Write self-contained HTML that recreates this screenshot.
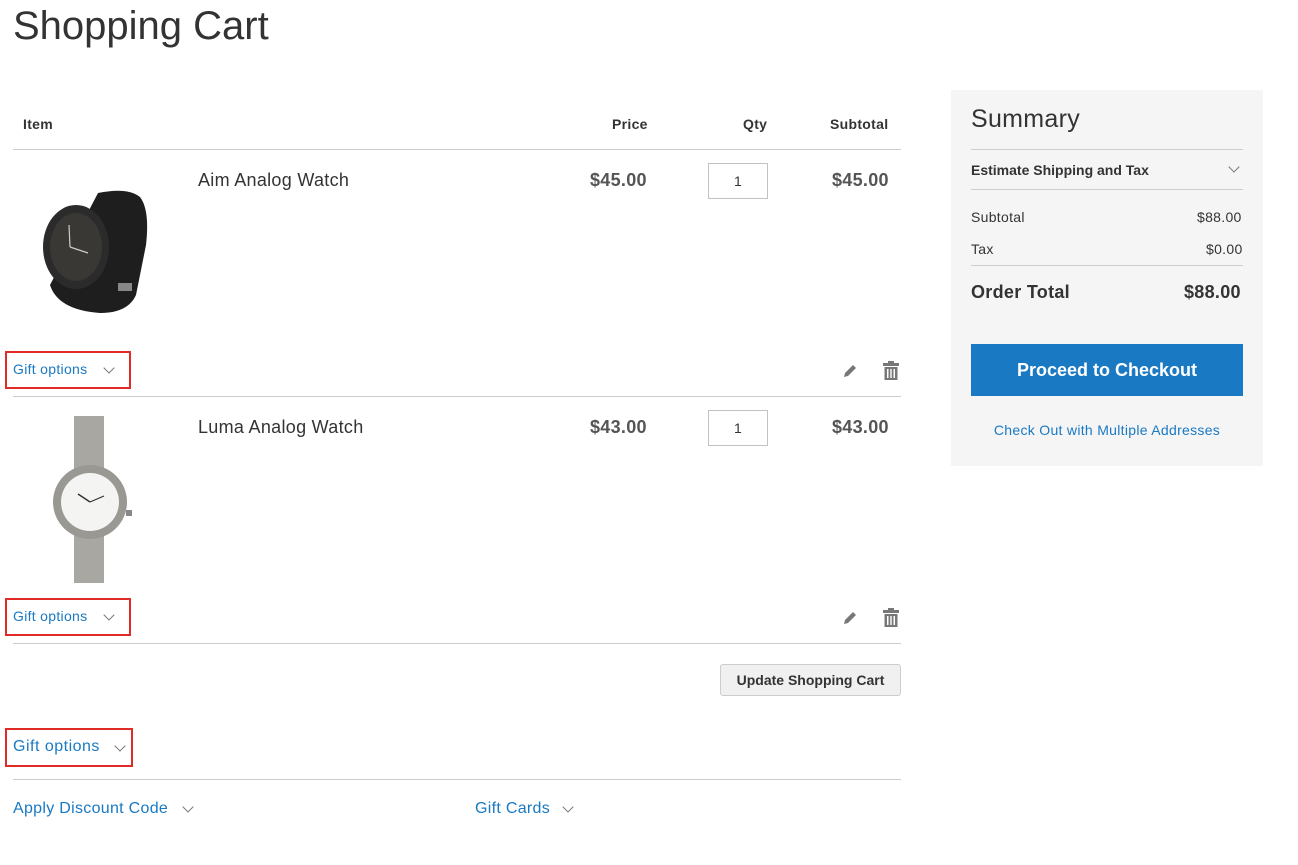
<!DOCTYPE html>
<html><head><meta charset="utf-8"><style>
*{margin:0;padding:0;box-sizing:border-box}
body{width:1298px;height:865px;background:#fff;font-family:"Liberation Sans",sans-serif;color:#333;position:relative;overflow:hidden;letter-spacing:0.3px}
.a{position:absolute;white-space:nowrap}
.line{position:absolute;height:1px;background:#ccc}
.th{font-size:14px;font-weight:bold}
.name{font-size:18px;color:#333}
.price{font-size:18px;font-weight:bold;color:#555}
.qty{position:absolute;width:60px;height:36px;border:1px solid #c2c2c2;font-size:14px;text-align:center;line-height:34px}
.link{color:#1979c3}
.box{position:absolute;border:2px solid #e02b27}
.chev{position:absolute;width:8px;height:8px;border-right:1.3px solid #777;border-bottom:1.3px solid #777;transform:rotate(45deg)}
</style></head><body>
<div class="a" style="left:13px;top:4px;font-size:40px;font-weight:300;color:#333;letter-spacing:0">Shopping Cart</div>

<div class="a th" style="left:23px;top:116px">Item</div>
<div class="a th" style="left:612px;top:116px">Price</div>
<div class="a th" style="left:743px;top:116px">Qty</div>
<div class="a th" style="left:830px;top:116px">Subtotal</div>
<div class="line" style="left:13px;top:149px;width:888px"></div>

<svg class="a" style="left:38px;top:185px" width="115" height="132" viewBox="0 0 115 132">
<path d="M60 8 Q90 2 102 12 Q112 25 108 60 L98 110 Q90 128 62 128 Q20 125 12 100 Z" fill="#1e1e1e"/>
<ellipse cx="38" cy="62" rx="33" ry="42" fill="#2b2b2b"/>
<ellipse cx="38" cy="62" rx="26" ry="34" fill="#3a3835"/>
<line x1="32" y1="62" x2="31" y2="40" stroke="#ccc" stroke-width="1.2"/>
<line x1="32" y1="62" x2="50" y2="68" stroke="#ccc" stroke-width="1.2"/>
<rect x="80" y="98" width="14" height="8" fill="#888"/>
</svg>
<div class="a name" style="left:198px;top:170px">Aim Analog Watch</div>
<div class="a price" style="left:590px;top:170px">$45.00</div>
<div class="qty" style="left:708px;top:163px">1</div>
<div class="a price" style="left:832px;top:170px">$45.00</div>
<div class="box" style="left:5px;top:351px;width:126px;height:38px"></div>
<div class="a link" style="left:13px;top:361px;font-size:14px">Gift options</div>
<div class="chev" style="left:105px;top:364px"></div>
<svg class="a" style="left:842px;top:363px" width="16" height="16" viewBox="0 0 16 16"><path d="M2 14 L3 10 L11 2 L14 5 L6 13 Z" fill="#777"/></svg>
<svg class="a" style="left:883px;top:361px" width="16" height="19" viewBox="0 0 16 19"><rect x="0" y="2" width="16" height="3" fill="#777"/><rect x="5" y="0" width="6" height="3" fill="#777"/><path d="M1.5 6 H14.5 V19 H1.5 Z M4 8 V17 H5.5 V8 Z M7.3 8 V17 H8.7 V8 Z M10.5 8 V17 H12 V8 Z" fill="#777" fill-rule="evenodd"/></svg>
<div class="line" style="left:13px;top:396px;width:888px"></div>

<svg class="a" style="left:34px;top:416px" width="100" height="168" viewBox="0 0 100 168">
<rect x="40" y="0" width="30" height="55" fill="#a9a7a2"/>
<rect x="40" y="115" width="30" height="52" fill="#a9a7a2"/>
<circle cx="56" cy="86" r="37" fill="#9a9892"/>
<circle cx="56" cy="86" r="29" fill="#f4f4f2"/>
<line x1="56" y1="86" x2="44" y2="78" stroke="#333" stroke-width="1.5"/>
<line x1="56" y1="86" x2="70" y2="80" stroke="#333" stroke-width="1.2"/>
<rect x="92" y="94" width="6" height="6" fill="#888"/>
</svg>
<div class="a name" style="left:198px;top:417px">Luma Analog Watch</div>
<div class="a price" style="left:590px;top:417px">$43.00</div>
<div class="qty" style="left:708px;top:410px">1</div>
<div class="a price" style="left:832px;top:417px">$43.00</div>
<div class="box" style="left:5px;top:598px;width:126px;height:38px"></div>
<div class="a link" style="left:13px;top:608px;font-size:14px">Gift options</div>
<div class="chev" style="left:105px;top:611px"></div>
<svg class="a" style="left:842px;top:610px" width="16" height="16" viewBox="0 0 16 16"><path d="M2 14 L3 10 L11 2 L14 5 L6 13 Z" fill="#777"/></svg>
<svg class="a" style="left:883px;top:608px" width="16" height="19" viewBox="0 0 16 19"><rect x="0" y="2" width="16" height="3" fill="#777"/><rect x="5" y="0" width="6" height="3" fill="#777"/><path d="M1.5 6 H14.5 V19 H1.5 Z M4 8 V17 H5.5 V8 Z M7.3 8 V17 H8.7 V8 Z M10.5 8 V17 H12 V8 Z" fill="#777" fill-rule="evenodd"/></svg>
<div class="line" style="left:13px;top:643px;width:888px"></div>

<div class="a" style="left:720px;top:664px;width:181px;height:32px;background:#f0f0f0;border:1px solid #cdcdcd;border-radius:3px;font-size:14px;font-weight:bold;text-align:center;line-height:30px;letter-spacing:0">Update Shopping Cart</div>

<div class="box" style="left:5px;top:728px;width:128px;height:39px"></div>
<div class="a link" style="left:13px;top:738px;font-size:16px;letter-spacing:0.5px">Gift options</div>
<div class="chev" style="left:116px;top:742px"></div>
<div class="line" style="left:13px;top:779px;width:888px"></div>
<div class="a link" style="left:13px;top:800px;font-size:16px">Apply Discount Code</div>
<div class="chev" style="left:184px;top:803px"></div>
<div class="a link" style="left:475px;top:800px;font-size:16px">Gift Cards</div>
<div class="chev" style="left:564px;top:803px"></div>

<div class="a" style="left:951px;top:90px;width:312px;height:376px;background:#f5f5f5"></div>
<div class="a" style="left:971px;top:105px;font-size:25px;font-weight:300">Summary</div>
<div class="line" style="left:971px;top:149px;width:272px"></div>
<div class="a" style="left:971px;top:162px;font-size:14px;font-weight:bold;letter-spacing:0">Estimate Shipping and Tax</div>
<div class="chev" style="left:1230px;top:163px"></div>
<div class="line" style="left:971px;top:189px;width:272px"></div>
<div class="a" style="left:971px;top:209px;font-size:14px">Subtotal</div>
<div class="a" style="left:1197px;top:209px;font-size:14px">$88.00</div>
<div class="a" style="left:971px;top:241px;font-size:14px">Tax</div>
<div class="a" style="left:1206px;top:241px;font-size:14px">$0.00</div>
<div class="line" style="left:971px;top:265px;width:272px"></div>
<div class="a" style="left:971px;top:282px;font-size:18px;font-weight:bold">Order Total</div>
<div class="a" style="left:1184px;top:282px;font-size:18px;font-weight:bold">$88.00</div>
<div class="a" style="left:971px;top:344px;width:272px;height:52px;background:#1979c3;color:#fff;font-size:18px;font-weight:bold;text-align:center;line-height:52px;letter-spacing:0">Proceed to Checkout</div>
<div class="a link" style="left:971px;top:422px;width:272px;text-align:center;font-size:14px">Check Out with Multiple Addresses</div>
</body></html>
